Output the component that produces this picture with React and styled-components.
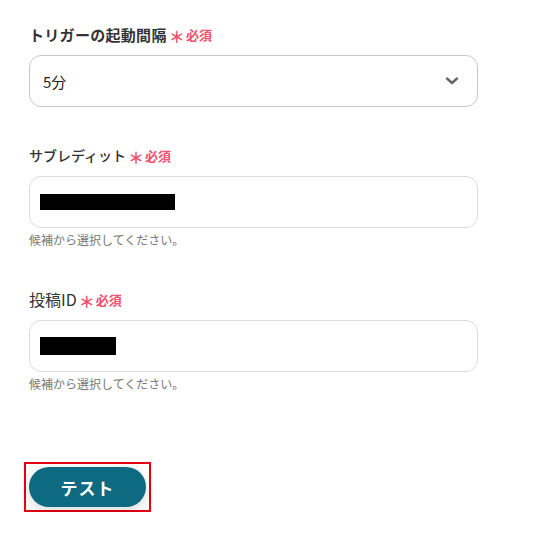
import React from 'react';
import styled, { createGlobalStyle } from 'styled-components';

const GlobalStyle = createGlobalStyle`
body{
    margin:0;
    background:#fff;
    font-family:"Noto Sans CJK JP","Noto Sans",sans-serif;
    color:#333;
}
`;

const Page = styled.div`
padding:24px 0 0 29px;
width:449px;
`;

const Field = styled.div`
display:flex;
flex-direction:column;
margin-bottom:${props => props.gap}px;
`;

const Label = styled.div`
display:flex;
align-items:center;
height:20px;
font-size:${props => props.size || 15}px;
letter-spacing:${props => props.spacing || 0}px;
font-weight:${props => props.weight || 500};
color:#333;
margin-bottom:11px;
.star{
    color:#f0506e;
    font-size:16px;
    font-weight:700;
    margin:0 1px 0 2px;
    position:relative;
    top:2px;
}
.req{
    color:#f0506e;
    font-size:13px;
    font-weight:700;
    letter-spacing:0;
}
`;

const Box = styled.div`
height:52px;
box-sizing:border-box;
border:1px solid ${props => props.select ? '#c8c8c8' : '#dcdcdc'};
border-radius:12px;
display:flex;
align-items:center;
justify-content:space-between;
padding:0 18px 0 ${props => props.select ? 13 : 10}px;
font-size:15px;
color:#222;
`;

const Redacted = styled.div`
background:#000;
height:${props => props.h}px;
width:${props => props.w}px;
`;

const Hint = styled.div`
font-size:12px;
color:#777;
margin-top:3px;
line-height:18px;
`;

const Outline = styled.div`
display:inline-block;
align-self:flex-start;
border:2px solid #e60012;
padding:3px;
margin-left:-5px;
`;

const TestButton = styled.button`
display:block;
width:117px;
height:40px;
border:none;
border-radius:20px;
background:#0e6a80;
color:#fff;
font-family:inherit;
font-size:17px;
font-weight:700;
letter-spacing:1px;
box-shadow:0 4px 14px rgba(0,0,0,0.15);
`;

const Chevron = () => (
    <svg width="14" height="10" viewBox="0 0 14 10">
        <path d="M2 2.5 L7 7 L12 2.5" fill="none" stroke="#666" strokeWidth="2.4" strokeLinecap="round" strokeLinejoin="round"/>
    </svg>
);

const Required = () => (
    <>
        <span className="star">＊</span>
        <span className="req">必須</span>
    </>
);

const App = () => {
    return(
        <Page>
            <GlobalStyle/>
            <Field gap={38}>
                <Label weight={700} spacing={0.3}>トリガーの起動間隔<Required/></Label>
                <Box select>
                    <span>5分</span>
                    <Chevron/>
                </Box>
            </Field>
            <Field gap={40}>
                <Label size={14}>サブレディット<Required/></Label>
                <Box>
                    <Redacted w={135} h={16}/>
                </Box>
                <Hint>候補から選択してください。</Hint>
            </Field>
            <Field gap={69}>
                <Label size={16} weight={400}>投稿ID<Required/></Label>
                <Box>
                    <Redacted w={76} h={18}/>
                </Box>
                <Hint>候補から選択してください。</Hint>
            </Field>
            <Outline>
                <TestButton>テスト</TestButton>
            </Outline>
        </Page>
    )
};
export default App;
